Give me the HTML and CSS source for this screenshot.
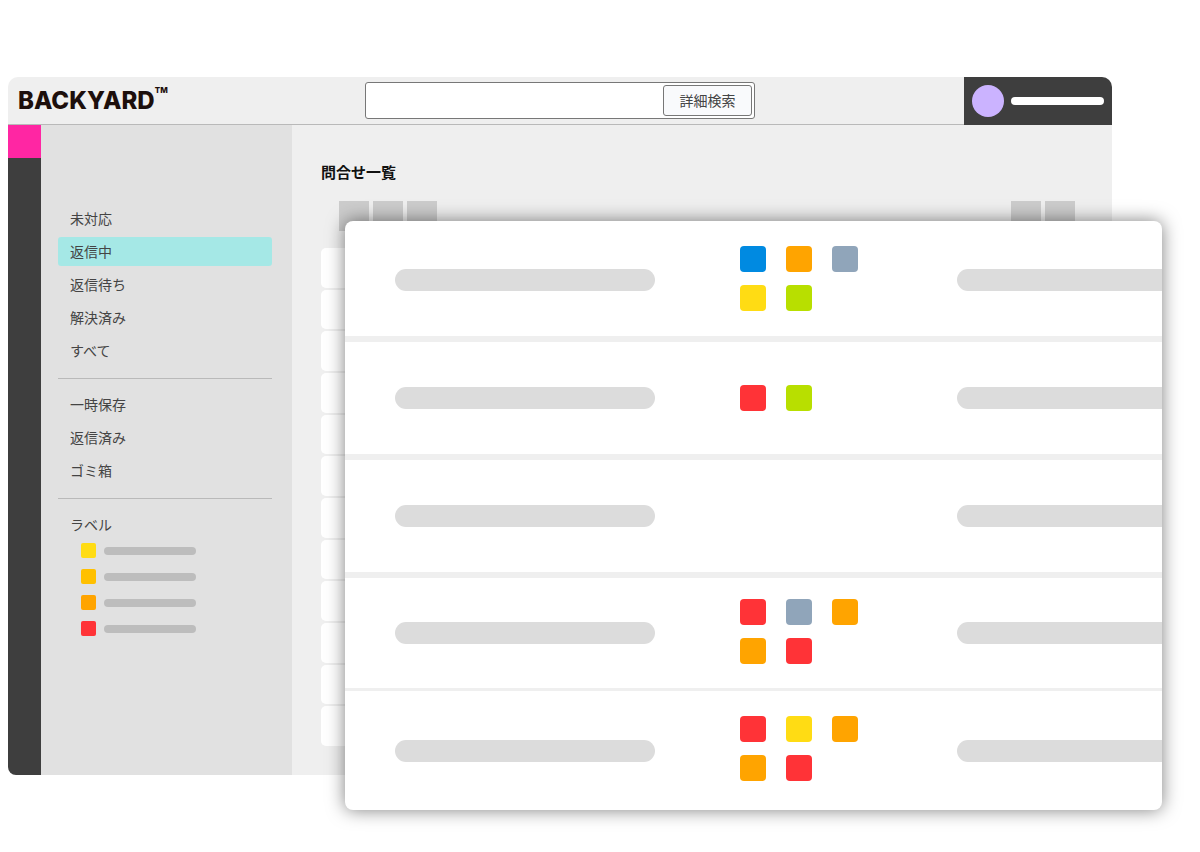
FILE: index.html
```html
<!DOCTYPE html>
<html lang="ja">
<head>
  <meta charset="UTF-8" />
  <meta name="viewport" content="width=device-width, initial-scale=1.0"/>
  <title>BACKYARD</title>
  <link rel="stylesheet" href="styles.css">
</head>
<body>
  <div class="app">
    <header class="topbar">
      <div class="logo">BACKYARD<span class="tm">TM</span></div>
      <form class="search">
        <input type="text" aria-label="検索" />
        <button type="button">詳細検索</button>
      </form>
      <div class="user">
        <span class="avatar"></span>
        <span class="user-name"></span>
      </div>
    </header>

    <div class="body">
      <div class="rail"><div class="rail-active"></div></div>

      <nav class="sidebar">
        <ul class="menu">
          <li><a href="#">未対応</a></li>
          <li><a href="#" class="active">返信中</a></li>
          <li><a href="#">返信待ち</a></li>
          <li><a href="#">解決済み</a></li>
          <li><a href="#">すべて</a></li>
        </ul>
        <ul class="menu">
          <li><a href="#">一時保存</a></li>
          <li><a href="#">返信済み</a></li>
          <li><a href="#">ゴミ箱</a></li>
        </ul>
        <div class="menu">
          <div class="label-title">ラベル</div>
          <ul class="labels">
            <li><span class="dot yellow"></span><span class="line"></span></li>
            <li><span class="dot amber"></span><span class="line"></span></li>
            <li><span class="dot orange"></span><span class="line"></span></li>
            <li><span class="dot red"></span><span class="line"></span></li>
          </ul>
        </div>
      </nav>

      <main>
        <h1>問合せ一覧</h1>
        <div class="tools">
          <span></span><span></span><span></span>
          <span class="push"></span><span></span>
        </div>
        <div class="list">
          <div></div><div></div><div></div><div></div><div></div><div></div>
          <div></div><div></div><div></div><div></div><div></div><div></div>
        </div>
      </main>
    </div>

    <!-- enlarged list on top of the window -->
    <section class="panel">
      <div class="row">
        <span class="bar"></span>
        <div class="tags two-lines">
          <span class="tag blue"></span><span class="tag orange"></span><span class="tag gray"></span>
          <span class="tag yellow"></span><span class="tag green"></span>
        </div>
        <span class="bar cut"></span>
      </div>
      <div class="row">
        <span class="bar"></span>
        <div class="tags">
          <span class="tag red"></span><span class="tag green"></span>
        </div>
        <span class="bar cut"></span>
      </div>
      <div class="row">
        <span class="bar"></span>
        <div class="tags"></div>
        <span class="bar cut"></span>
      </div>
      <div class="row short">
        <span class="bar"></span>
        <div class="tags two-lines">
          <span class="tag red"></span><span class="tag gray"></span><span class="tag orange"></span>
          <span class="tag orange"></span><span class="tag red"></span>
        </div>
        <span class="bar cut"></span>
      </div>
      <div class="row last">
        <span class="bar"></span>
        <div class="tags two-lines">
          <span class="tag red"></span><span class="tag yellow"></span><span class="tag orange"></span>
          <span class="tag orange"></span><span class="tag red"></span>
        </div>
        <span class="bar cut"></span>
      </div>
    </section>
  </div>
</body>
</html>
```
FILE: styles.css
```css
:root {
  --bg: #efefef;
  --side: #e1e1e1;
  --dark: #3e3e3e;
  --line: #b9b9b9;
  --bar: #dcdcdc;
  --active: #a5e8e6;
  --pink: #ff26a3;
}

* {
  box-sizing: border-box;
}

body {
  margin: 0;
  padding: 77px 88px 77px 8px;
  background: #ffffff;
  color: #444444;
  font-family: "Noto Sans CJK JP", sans-serif;
  font-size: 14px;
}

ul {
  list-style: none;
  margin: 0;
  padding: 0;
}

.app {
  position: relative;
}

.topbar {
  display: grid;
  grid-template-columns: 1fr 390px 1fr;
  align-items: center;
  height: 48px;
  background: linear-gradient(var(--line), var(--line)) bottom / 100% 1px no-repeat var(--bg);
  border-radius: 10px 10px 0 0;
}

.logo {
  display: flex;
  align-items: flex-start;
  padding-left: 10px;
  color: #1d0f0c;
  font-family: Inter, sans-serif;
  font-size: 24px;
  font-weight: 800;
  line-height: 32px;
}

.tm {
  font-size: 8px;
  line-height: 10px;
}

.search {
  display: flex;
  height: 37px;
  margin-bottom: 2px;
  padding: 2px;
  background: #ffffff;
  border: 1px solid #777777;
  border-radius: 3px;
}

.search input {
  flex: 1;
  min-width: 0;
  border: none;
  outline: none;
  background: none;
}

.search button {
  width: 89px;
  padding: 0;
  border: 1px solid #777777;
  border-radius: 3px;
  background: #f9fafc;
  color: #444444;
  font-family: inherit;
  font-size: 14px;
}

.user {
  display: flex;
  align-items: center;
  justify-self: end;
  gap: 7px;
  width: 148px;
  height: 48px;
  padding: 0 8px;
  background: var(--dark);
  border-radius: 0 10px 0 0;
}

.avatar {
  width: 32px;
  height: 32px;
  border-radius: 50%;
  background: #cbb3ff;
}

.user-name {
  flex: 1;
  height: 8px;
  border-radius: 4px;
  background: #ffffff;
}

.body {
  display: flex;
}

.rail {
  width: 33px;
  background: var(--dark);
  border-radius: 0 0 0 8px;
}

.rail-active {
  height: 33px;
  background: var(--pink);
}

.sidebar {
  width: 251px;
  padding: 79px 20px 139px 17px;
  background: var(--side);
}

.menu + .menu {
  margin-top: 13px;
  padding-top: 11px;
  border-top: 1px solid var(--line);
}

.menu a,
.label-title {
  display: block;
  height: 29px;
  padding-left: 12px;
  border-radius: 3px;
  color: inherit;
  line-height: 28px;
  text-decoration: none;
}

.menu li + li {
  margin-top: 4px;
}

.menu a.active {
  background: var(--active);
}

.labels {
  padding: 4px 0 0 23px;
}

.labels li {
  display: flex;
  align-items: center;
  gap: 8px;
  height: 15px;
}

.labels li + li {
  margin-top: 11px;
}

.dot {
  width: 15px;
  height: 15px;
  border-radius: 2px;
}

.line {
  width: 92px;
  height: 8px;
  border-radius: 4px;
  background: #bdbdbd;
}

main {
  flex: 1;
  display: flex;
  flex-direction: column;
  padding: 35px 29px 29px;
  background: var(--bg);
}

h1 {
  margin: 0;
  color: #111111;
  font-size: 15px;
  font-weight: 700;
  line-height: 24px;
}

.tools {
  display: flex;
  gap: 4px;
  padding: 17px 8px 17px 18px;
}

.tools span {
  width: 30px;
  height: 30px;
  background: #cccccc;
}

.tools .push {
  margin-left: auto;
}

.list {
  flex: 1;
  display: flex;
  flex-direction: column;
  gap: 2px;
}

.list div {
  flex: 1;
  border-radius: 5px;
  background: #ffffff;
}

.panel {
  position: absolute;
  top: 144px;
  left: 337px;
  right: -50px;
  padding-top: 3px;
  background: #ffffff;
  border-radius: 8px;
  box-shadow: 0 0 18px rgba(0, 0, 0, 0.5);
}

.row {
  display: grid;
  grid-template-columns: 260px 118px 1fr;
  column-gap: 85px;
  align-items: center;
  height: 118px;
  padding-left: 50px;
  border-bottom: 6px solid var(--bg);
}

.row.short {
  height: 113px;
  border-bottom-width: 3px;
}

.row.last {
  height: 119px;
  border-bottom: none;
}

.bar {
  height: 22px;
  border-radius: 11px;
  background: var(--bar);
}

.bar.cut {
  margin-left: 14px;
  border-radius: 11px 0 0 11px;
}

.tags {
  display: grid;
  grid-template-columns: repeat(3, 26px);
  gap: 13px 20px;
}

.tags.two-lines {
  padding-bottom: 4px;
}

.tag {
  height: 26px;
  border-radius: 4px;
}

.yellow { background: #ffdc14; }
.amber { background: #ffc000; }
.orange { background: #ffa400; }
.red { background: #ff3337; }
.blue { background: #008ae1; }
.gray { background: #90a5ba; }
.green { background: #b8df00; }
```
